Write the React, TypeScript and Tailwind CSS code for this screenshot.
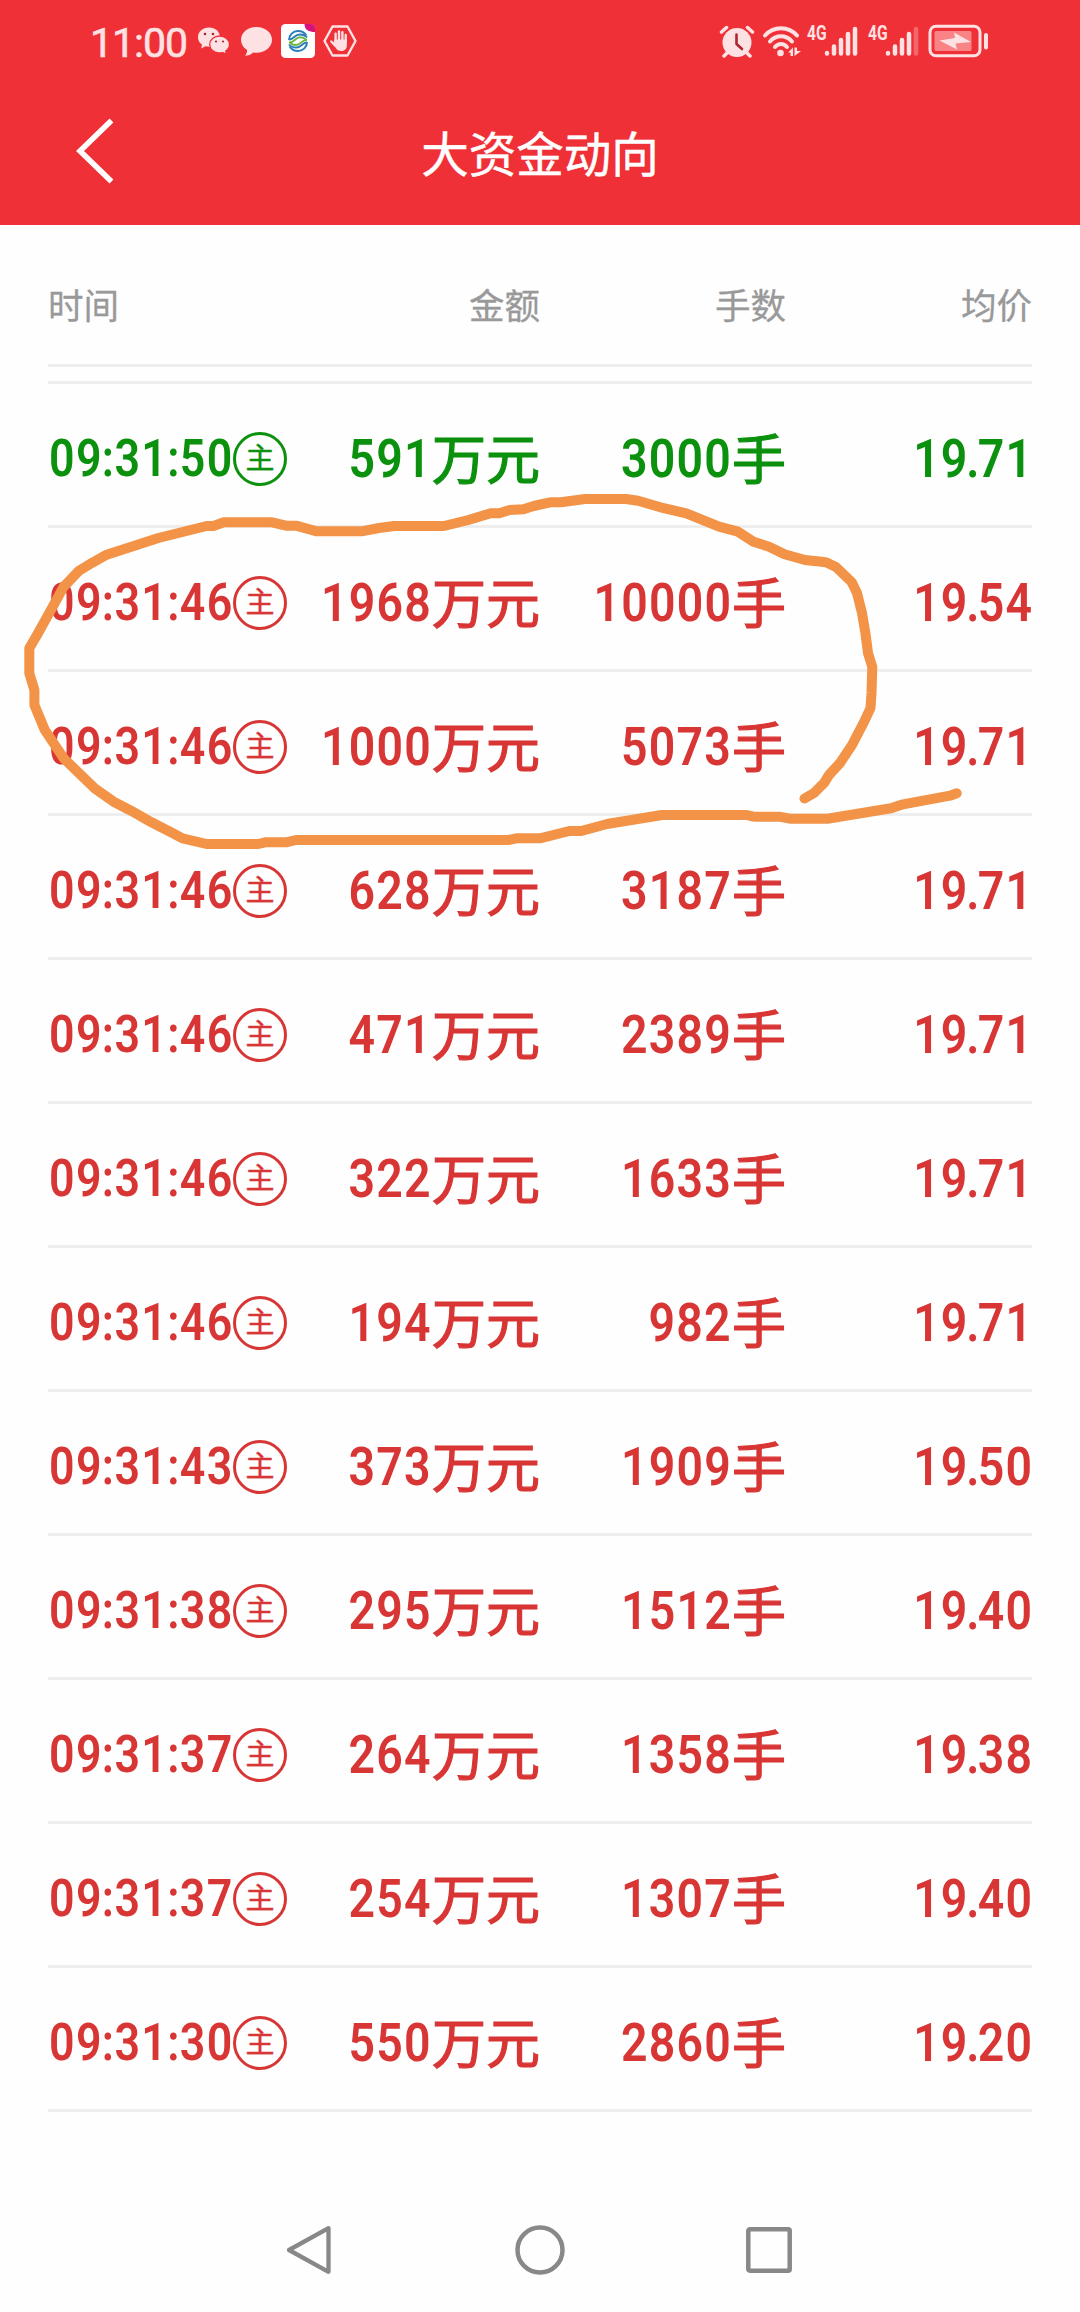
import React from 'react'

type Trade = {
  time: string
  amount: string
  hands: string
  price: string
  sell?: boolean
}

const trades: Trade[] = [
  { time: '09:31:50', amount: '591', hands: '3000', price: '19.71', sell: true },
  { time: '09:31:46', amount: '1968', hands: '10000', price: '19.54' },
  { time: '09:31:46', amount: '1000', hands: '5073', price: '19.71' },
  { time: '09:31:46', amount: '628', hands: '3187', price: '19.71' },
  { time: '09:31:46', amount: '471', hands: '2389', price: '19.71' },
  { time: '09:31:46', amount: '322', hands: '1633', price: '19.71' },
  { time: '09:31:46', amount: '194', hands: '982', price: '19.71' },
  { time: '09:31:43', amount: '373', hands: '1909', price: '19.50' },
  { time: '09:31:38', amount: '295', hands: '1512', price: '19.40' },
  { time: '09:31:37', amount: '264', hands: '1358', price: '19.38' },
  { time: '09:31:37', amount: '254', hands: '1307', price: '19.40' },
  { time: '09:31:30', amount: '550', hands: '2860', price: '19.20' },
]

const Signal: React.FC<{ weak?: boolean }> = ({ weak }) => (
  <div className="flex h-8 w-[52px]">
    <span className="h-4 w-[17px] origin-left scale-x-[0.78] font-[Roboto] text-[20px] leading-4 font-bold">
      4G
    </span>
    <svg className="h-8 w-[35px]" viewBox="0 0 35 32" stroke="currentColor" strokeWidth="4.500" strokeLinecap="round">
      <path d="M3 28.5v-.5M10 28.5v-7M17 28.5v-13.500M24 28.500v-19.500" />
      <path d="M31 28.500V4" opacity={weak ? 0.3 : 1} />
    </svg>
  </div>
)

const StatusBar: React.FC = () => (
  <div className="flex h-[82px] items-center justify-between pr-[90px] pl-[90px] text-[#fee2e3]">
    <div className="flex items-center">
      <span className="w-[107px] pt-[4px] font-[Roboto] text-[41px] leading-none tracking-[-1px] [-webkit-text-stroke:0.6px]">
        11:00
      </span>
      <svg className="h-[30px] w-[34px]" viewBox="0 0 34 30">
        <path
          fill="currentColor"
          d="M12 1.500C5.400 1.500 1 6 1 11.200c0 3.100 1.500 5.600 4 7.400l-.8 4 4.300-2.300c1.200.3 2.300.5 3.500.5C18.500 20.800 23 16.500 23 11.200S18.500 1.500 12 1.500z"
        />
        <path
          fill="currentColor"
          stroke="#f03037"
          strokeWidth="1.300"
          d="M22.500 10c-5.500 0-9.800 3.700-9.800 8.500s4.300 8.500 9.800 8.500c1.200 0 2.300-.2 3.300-.5l3.700 2-.8-3.400c2.200-1.500 3.800-3.900 3.800-6.600 0-4.800-4.500-8.500-10-8.500z"
        />
        <g fill="#a8262c">
          <circle cx="8" cy="8" r="1.300" />
          <circle cx="16" cy="8" r="1.300" />
          <circle cx="19" cy="15.500" r="1.100" />
          <circle cx="26" cy="15.500" r="1.100" />
        </g>
      </svg>
      <svg className="ml-[9px] h-[31px] w-[33px]" viewBox="0 0 33 31" fill="currentColor">
        <path d="M16.500 1C7.800 1 1 6.500 1 13.800c0 4.200 2.300 7.700 6 10.200.3 2-.5 4-2 5.700 3.200-.1 6-1 8-3.200 1.200.2 2.300.2 3.500.2 8.700 0 15.500-5.600 15.500-12.900S25.200 1 16.500 1z" />
      </svg>
      <svg className="ml-2 h-[34px] w-[34px]" viewBox="0 0 34 34" fill="none">
        <rect width="34" height="34" rx="4.500" fill="#fff" />
        <g strokeWidth="2" stroke="#2b7fb8">
          <path d="M8 16c0-5 4-9 9-9 3.500 0 6.500 1.500 8.300 4.500" />
          <path d="M8 15.500c5 0 5.500-5 10.500-5 3.500 0 6 1 7.500 3" />
          <path d="M26 18c0 5-4 9-9 9-3.500 0-6.500-1.500-8.300-4.500" />
          <path d="M26 18.500c-5 0-5.500 5-10.500 5-3.500 0-6-1-7.500-3" />
        </g>
        <g strokeWidth="1.900" stroke="#6fb544">
          <path d="M8 18.500c6 0 6-5.200 11-5.200 3 0 4.500.8 6.500 2.500" />
          <path d="M26 16c-6 0-6 5-11 5-2.500 0-4.500-.6-6-2" />
        </g>
        <path d="M23.500 0H30c2.500 0 4 1.500 4 4v4c-6 0-10.500-2-10.500-8z" fill="#d6127c" />
      </svg>
      <svg className="ml-2 h-[34px] w-[34px]" viewBox="0 0 34 34">
        <path
          d="M9.500 2.500h15L32.500 17l-8 14.500h-15L1.500 17z"
          fill="none"
          stroke="currentColor"
          strokeWidth="2.400"
          strokeLinejoin="round"
        />
        <g stroke="currentColor" strokeLinecap="round" fill="none" strokeWidth="2.400">
          <path d="M12.600 18V9.800M16 17V7.500M19.400 17V8.200M22.700 18v-7M12 21.500l-3.700-4" />
        </g>
        <path fill="currentColor" d="M11.400 15.500h12.500V21c0 3.500-2 6-5.500 6-3 0-4.500-1-6-3.500l-2-3.500z" />
      </svg>
    </div>

    <div className="flex items-center">
      <svg className="h-[34px] w-[36px]" viewBox="0 0 36 34">
        <circle cx="18" cy="18.500" r="14.500" fill="currentColor" />
        <g stroke="currentColor" strokeWidth="3.500" strokeLinecap="round">
          <path d="M2.500 8l5-4.500M33.500 8l-5-4.500M8 29l-3 3M28 29l3 3" />
        </g>
        <path
          d="M17.500 10.500v9.500l5.500 5"
          fill="none"
          stroke="#b0262d"
          strokeWidth="2.600"
          strokeLinecap="round"
          strokeLinejoin="round"
        />
      </svg>
      <svg className="ml-[7px] h-[34px] w-[40px]" viewBox="0 0 40 34">
        <g fill="none" stroke="currentColor" strokeWidth="4" strokeLinecap="round">
          <path d="M3 11.500C11.500 1.800 26.500 1.800 35 11.500" />
          <path d="M8 17.500c6-7 16-7 22 0" />
          <path d="M13 23c3.500-4 8.500-4 12 0" />
        </g>
        <circle cx="18.500" cy="29" r="3.300" fill="currentColor" />
        <path fill="currentColor" d="M26 28.500l5-5V32h-2.500v-3.500zM32.500 32v-8.500H35V27h4z" />
      </svg>
      <div className="ml-[5px] flex gap-[9px]">
        <Signal />
        <Signal weak />
      </div>
      <svg className="ml-[8px] h-[34px] w-[62px]" viewBox="0 0 62 34">
        <rect x="2" y="2.200" width="50" height="29.500" rx="6" fill="none" stroke="currentColor" strokeWidth="3" />
        <rect x="6.500" y="7" width="37" height="20" rx="1.500" fill="#f98486" />
        <path fill="currentColor" d="M11.500 16.500L27 14l-1-5.500 17 9.500-15.500 1.500 1.500 6z" />
        <path d="M58 11v12.500" stroke="currentColor" strokeWidth="4" strokeLinecap="round" />
      </svg>
    </div>
  </div>
)

const Header: React.FC = () => (
  <header className="h-[225px] bg-[#f03037]">
    <StatusBar />
    <div className="grid h-[143px] grid-cols-3 items-center px-[75px] pb-1.5 text-white">
      <a href="#" aria-label="返回">
        <svg className="h-[66px] w-10" viewBox="0 0 40 66" fill="none" stroke="currentColor" strokeWidth="5.500">
          <path d="M36.500 2.500L5 33l31.500 30.500" />
        </svg>
      </a>
      <h1 className="pt-0.5 text-center text-[47.500px] leading-none whitespace-nowrap [-webkit-text-stroke:0.5px]">
        大资金动向
      </h1>
    </div>
  </header>
)

// digits, with the separators set closer than the font does
const Num: React.FC<{ value: string }> = ({ value }) => (
  <>
    {value.split(/([:.])/).map((part, i) => {
      if (part === ':') return <span key={i} className="-mx-[1.200px]">:</span>
      if (part === '.') return <span key={i} className="-mr-[3px] -ml-[2.500px]">.</span>
      return part
    })}
  </>
)

const Row: React.FC<{ trade: Trade }> = ({ trade }) => (
  <li
    className={`grid h-36 grid-cols-4 items-center border-b-[3px] border-[#eeeeee] pt-[7px] text-right text-[54px] leading-[60px] ${
      trade.sell ? 'text-[#0b910d]' : 'text-[#d83535]'
    }`}
  >
    <div className="flex items-center pt-px">
      <span className="w-[185px] origin-left translate-x-px scale-x-[0.86] pt-px text-left font-[Roboto] text-[52px] leading-[60px] font-semibold tracking-[1.600px] whitespace-nowrap">
        <Num value={trade.time} />
      </span>
      <span className="flex h-[54px] w-[54px] shrink-0 justify-center rounded-full border-[3px] border-current text-[29px] leading-[42px] [-webkit-text-stroke:0.4px]">
        主
      </span>
    </div>
    <div className="flex justify-end">
      <span className="origin-right scale-x-[0.86] pt-px font-[Roboto] font-semibold tracking-[1.400px]">
        {trade.amount}
      </span>
      <span className="-mt-px [-webkit-text-stroke:1.200px]">万元</span>
    </div>
    <div className="flex justify-end">
      <span className="origin-right scale-x-[0.86] pt-px font-[Roboto] font-semibold tracking-[1.400px]">
        {trade.hands}
      </span>
      <span className="-mt-px [-webkit-text-stroke:1.200px]">手</span>
    </div>
    <span className="origin-right translate-x-px scale-x-[0.86] pt-px font-[Roboto] font-semibold tracking-[1.200px]">
      <Num value={trade.price} />
    </span>
  </li>
)

// hand drawn marker around the two biggest orders
const Marker: React.FC = () => (
  <svg
    className="pointer-events-none absolute top-0 left-0 h-[900px] w-[1080px]"
    viewBox="0 0 1080 900"
    fill="none"
    stroke="#f29347"
    strokeWidth="10"
    strokeLinecap="round"
    strokeLinejoin="round"
  >
    <path d="M804.500 798.500L814 793L824 783L829 775L840 763L852 745L864 722L870.500 708L871.500 693L872.300 667L868 653L865.400 633L862 613L857 593L851.600 582L836 567L826 562.300L805 560L784.500 554.300L769 546.700L753.500 541.700L738 531.700L719 526.700L686.300 513.300L660.500 507.300L638 500.700L626 499H585L561 502.300H550.300L533.700 506L523.400 509.300L509.600 510L499.300 513.300H490.700L468.300 520L444 526H394.300L379 528L361.600 531.300H316.800L296 525.700H286L272 522.300H223.800L213.500 526H206.600L158.400 538L106.700 554.700L93 562.300L79 570.700L63.700 586.700L50 611.700L38 633.300L29.300 648.300V673.300L34.400 690V705L44.800 730L63.700 758.300L94.700 788.300L113.600 801.700L131 810.700L151.500 822.300L172 832.700L182.500 838.300L206.600 844H258.300L265 842.300H286L296 840H508L516.500 838.300H540L569.300 831H581.300L607 824L662 815H746.600L753.500 816.700H779.300L789.700 818.700H827.500L891 808.300L903 804.300L950 795.700L956.700 793.300" />
  </svg>
)

const NavBar: React.FC = () => (
  <nav className="flex h-[124px] items-center justify-center gap-[181px] pr-px text-[#888888]">
    <svg className="h-[50px] w-[47px]" viewBox="0 0 47 50" fill="none" stroke="currentColor" strokeWidth="4.300">
      <path d="M41.500 3.200v43.600L2 25z" strokeLinejoin="round" />
    </svg>
    <svg className="h-[50px] w-[50px]" viewBox="0 0 50 50" fill="none" stroke="currentColor" strokeWidth="4.500">
      <circle cx="25" cy="25" r="22.500" />
    </svg>
    <svg className="h-[46px] w-[46px]" viewBox="0 0 46 46" fill="none" stroke="currentColor" strokeWidth="4.500">
      <rect x="2.300" y="2.300" width="41.400" height="41.400" rx="1.500" />
    </svg>
  </nav>
)

const App: React.FC = () => {
  return (
    <div className="relative flex h-[2312px] w-[1080px] flex-col bg-[#fefefe] font-['Noto_Sans_CJK_SC',sans-serif]">
      <Header />
      <main className="flex-1 px-12">
        <div className="grid h-[142px] grid-cols-4 items-center border-b-[3px] border-[#eeeeee] pt-[19px] text-right text-[35.500px] leading-none text-[#999999] [-webkit-text-stroke:0.3px]">
          <span className="text-left">时间</span>
          <span>金额</span>
          <span>手数</span>
          <span>均价</span>
        </div>
        <ul className="mt-3.5 border-t-[3px] border-[#eeeeee]">
          {trades.map((trade, index) => (
            <Row key={index} trade={trade} />
          ))}
        </ul>
      </main>
      <NavBar />
      <Marker />
    </div>
  )
}

export default App
